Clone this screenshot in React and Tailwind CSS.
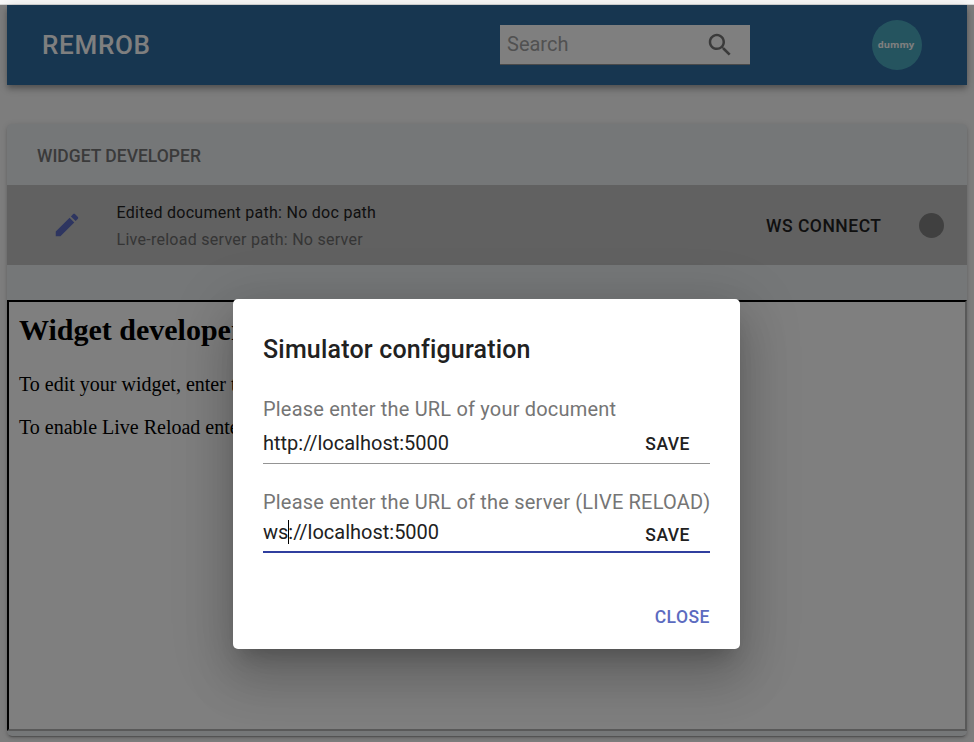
import React from "react";

function SearchIcon() {
  return (
    <svg viewBox="0 0 24 24" className="mt-px h-[30px] w-[30px]" fill="#757575">
      <path d="M15.5 14h-.79l-.28-.27C15.41 12.59 16 11.11 16 9.5 16 5.91 13.09 3 9.5 3S3 5.91 3 9.5 5.91 16 9.5 16c1.61 0 3.09-.59 4.23-1.57l.27.28v.79l5 4.99L20.49 19l-4.99-5zm-6 0C7.01 14 5 11.99 5 9.5S7.01 5 9.5 5 14 7.01 14 9.5 11.99 14 9.5 14z" />
    </svg>
  );
}

function EditIcon() {
  return (
    <svg viewBox="0 0 24 24" className="h-[30px] w-[30px]" fill="#5c6bc0">
      <path d="M3 17.25V21h3.75L17.81 9.94l-3.75-3.75L3 17.25zM20.71 7.04c.39-.39.39-1.02 0-1.41l-2.34-2.34c-.39-.39-1.02-.39-1.41 0l-1.83 1.83 3.75 3.75 1.83-1.83z" />
    </svg>
  );
}

function Header() {
  return (
    <header className="flex h-20 shrink-0 items-center bg-[#2e6ca1] pl-[35px] pr-[45px] shadow-[0_3px_5px_-1px_rgba(0,0,0,0.2),0_5px_6px_0_rgba(0,0,0,0.14),0_1px_12px_0_rgba(0,0,0,0.12)]">
      <h1 className="w-[458px] text-[26px] font-medium tracking-[0.7px] text-white">REMROB</h1>
      <div className="mb-px flex h-10 w-[250px] items-center justify-between border-b border-[#949494] bg-white pl-[7px] pr-[15px]">
        <span className="text-[20px] text-[#a3a3a3]">Search</span>
        <SearchIcon />
      </div>
      <div className="ml-auto flex h-[50px] w-[50px] items-center justify-center rounded-full bg-[#4ba9bf] pr-[2px] font-['Open_Sans',sans-serif] text-[9.5px] font-bold text-white">
        dummy
      </div>
    </header>
  );
}

function WidgetCard() {
  return (
    <section className="mt-[39px] flex h-[612px] flex-col rounded-[5px] bg-[#ebeef1] pb-[5px] shadow-[0_3px_1px_-2px_rgba(0,0,0,0.2),0_2px_3px_0_rgba(0,0,0,0.14),0_1px_6px_0_rgba(0,0,0,0.12)]">
      <h2 className="flex h-[61px] items-center pl-[30px] pt-[3px] text-[17.5px] font-medium text-[#757575]">
        WIDGET DEVELOPER
      </h2>
      <div className="flex h-20 items-center bg-[#c2c2c2] pl-[44.5px] pr-[23px]">
        <EditIcon />
        <div className="ml-[35px] pt-[2px] text-[16px] leading-[27px] tracking-[0.27px]">
          <p className="text-[#212121]">Edited document path: No doc path</p>
          <p className="text-[#6b6b6b]">Live-reload server path: No server</p>
        </div>
        <span className="ml-auto pt-[2px] text-[17.5px] font-medium tracking-[0.02857em] text-[#212121]">WS CONNECT</span>
        <span className="ml-[37.5px] h-[25px] w-[25px] rounded-full bg-[#808080]" />
      </div>
      <div className="mt-[35px] flex-1 border-2 border-b-[#b2b2b2] border-l-black border-r-[#b2b2b2] border-t-black bg-white pl-[10px] pt-[10px] font-['Liberation_Serif',serif] text-black">
        <h2 className="text-[30px] font-bold leading-[35px]">Widget developer</h2>
        <p className="mt-[26px] text-[20px] leading-[23px]">To edit your widget, enter t</p>
        <p className="mt-5 text-[20px] leading-[23px]">To enable Live Reload enter</p>
      </div>
    </section>
  );
}

function SimulatorDialog() {
  return (
    <div className="flex h-[350px] w-[507px] flex-col rounded-[5px] bg-white px-[30px] text-[#212121] shadow-[0_14px_19px_-9px_rgba(0,0,0,0.2),0_30px_48px_4px_rgba(0,0,0,0.14),0_11px_58px_10px_rgba(0,0,0,0.12)]">
      <h2 className="mt-[31px] text-[25px] font-medium leading-10 tracking-[0.0075em]">Simulator configuration</h2>
      <p className="mt-6 whitespace-nowrap text-[20px] leading-[30px] tracking-[0.00938em] text-[#757575]">
        Please enter the URL of your document
      </p>
      <div className="flex h-10 items-center justify-between border-b border-[#949494] pr-5">
        <span className="pb-[2px] text-[20px]">http://localhost:5000</span>
        <span className="pt-[2px] text-[17.5px] font-medium tracking-[0.02857em]">SAVE</span>
      </div>
      <p className="mt-[23px] whitespace-nowrap text-[20px] leading-[30px] tracking-[0.00938em] text-[#757575]">
        Please enter the URL of the server (LIVE RELOAD)
      </p>
      <div className="flex h-9 items-center justify-between border-b-2 border-[#303f9f] pr-5">
        <span className="mb-1 flex items-center text-[20px] leading-[24px]">
          ws
          <span className="-mr-px h-6 w-px bg-black" />
          ://localhost:5000
        </span>
        <span className="pt-[3px] text-[17.5px] font-medium tracking-[0.02857em]">SAVE</span>
      </div>
      <div className="mt-[50px] text-right text-[17.5px] font-medium leading-[28px] tracking-[0.02857em] text-[#5c6bc0]">
        CLOSE
      </div>
    </div>
  );
}

export default function App() {
  return (
    <div className="relative h-[742px] w-[974px] overflow-hidden bg-[#fafafa] font-[Roboto,sans-serif]">
      <div className="h-[5px] border-b border-[#d8d8d8] bg-[#f8f8f8]" />
      <div className="px-[7px]">
        <Header />
        <WidgetCard />
      </div>
      <div className="absolute inset-x-0 bottom-0 top-[5px] flex items-start bg-black/50 pl-[233px] pt-[294px]">
        <SimulatorDialog />
      </div>
    </div>
  );
}
